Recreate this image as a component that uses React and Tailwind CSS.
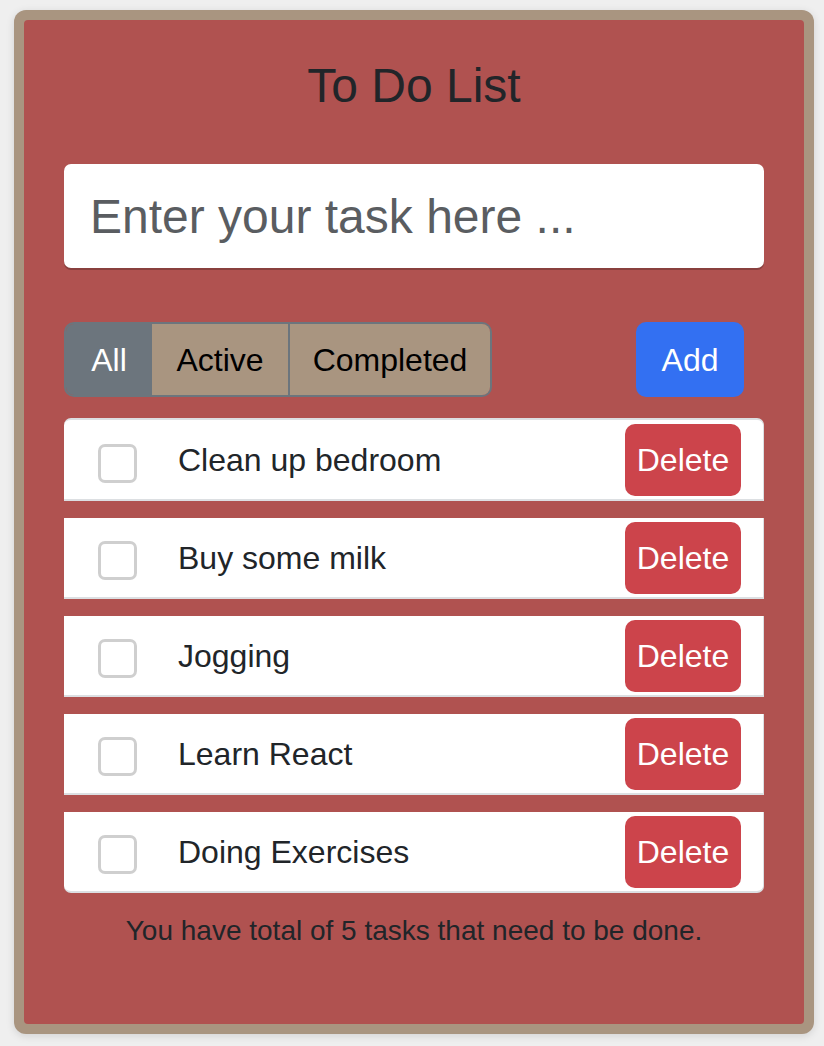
import { useState } from 'react'

const initialTasks = [
  { id: 1, title: 'Clean up bedroom', done: false },
  { id: 2, title: 'Buy some milk', done: false },
  { id: 3, title: 'Jogging', done: false },
  { id: 4, title: 'Learn React', done: false },
  { id: 5, title: 'Doing Exercises', done: false },
]

function FilterGroup({ filter, onChange }) {
  const base = 'flex h-full items-center justify-center text-[32px] leading-none'
  return (
    <div className="flex h-[75px] w-[428px] overflow-hidden rounded-[10px] border-2 border-[#6c757d]">
      <button
        className={`${base} w-[86px] ${filter === 'all' ? 'bg-[#6c757d] text-white' : 'bg-[#a99580] text-black'}`}
        onClick={() => onChange('all')}
      >
        All
      </button>
      <button
        className={`${base} w-[136px] ${filter === 'active' ? 'bg-[#6c757d] text-white' : 'bg-[#a99580] text-black'}`}
        onClick={() => onChange('active')}
      >
        Active
      </button>
      <button
        className={`${base} flex-1 border-l-2 border-[#6c757d] ${filter === 'completed' ? 'bg-[#6c757d] text-white' : 'bg-[#a99580] text-black'}`}
        onClick={() => onChange('completed')}
      >
        Completed
      </button>
    </div>
  )
}

function TaskRow({ task, isFirst, isLast, onToggle, onDelete }) {
  return (
    <li
      className={`flex items-center border-b-2 border-r border-[#dcdfe2] bg-white pl-[34px] pr-[22px] ${
        isFirst ? 'h-[83px] rounded-t-[7px] border-t-2 pt-[1px]' : 'mt-[17px] h-[81px]'
      } ${isLast ? 'rounded-b-[7px]' : ''}`}
    >
      <button
        className={`mt-[6px] h-[39px] w-[39px] shrink-0 rounded-[7px] border-[3px] border-[#cfcfcf] ${task.done ? 'bg-[#cfcfcf]' : 'bg-white'}`}
        onClick={() => onToggle(task.id)}
      />
      <span className={`ml-[41px] flex-1 text-[32px] text-[#212529] ${task.done ? 'line-through' : ''}`}>
        {task.title}
      </span>
      <button
        className="h-[72px] w-[116px] rounded-[10px] bg-[#cc444b] text-[32px] leading-none text-white"
        onClick={() => onDelete(task.id)}
      >
        Delete
      </button>
    </li>
  )
}

export default function App() {
  const [tasks, setTasks] = useState(initialTasks)
  const [text, setText] = useState('')
  const [filter, setFilter] = useState('all')

  const visible = tasks.filter((t) =>
    filter === 'all' ? true : filter === 'active' ? !t.done : t.done
  )
  const remaining = tasks.filter((t) => !t.done).length

  const addTask = () => {
    if (!text.trim()) return
    setTasks([...tasks, { id: Date.now(), title: text.trim(), done: false }])
    setText('')
  }

  return (
    <div className="min-h-[1046px] bg-[#efefef] pl-[14px] pt-[10px] font-['Liberation_Sans',Arial,sans-serif]">
      <div className="w-[800px] rounded-[12px] bg-[#a99580] p-[10px] shadow-[0_2px_8px_rgba(0,0,0,0.12)]">
        <div className="rounded-[4px] bg-[#b05250] px-[40px] pb-[72px] pt-[38px]">
          <h1 className="text-center text-[48px] leading-[56px] text-[#212529]">To Do List</h1>

          <input
            className="mt-[50px] block h-[104px] w-full rounded-[7px] bg-white px-[26px] text-[48px] text-[#212529] shadow-[0_2px_0_rgba(0,0,0,0.22)] outline-none placeholder:text-[#5a5d61]"
            placeholder="Enter your task here ..."
            value={text}
            onChange={(e) => setText(e.target.value)}
            onKeyDown={(e) => e.key === 'Enter' && addTask()}
          />

          <div className="mt-[54px] flex items-center justify-between">
            <FilterGroup filter={filter} onChange={setFilter} />
            <button
              className="mr-[20px] h-[75px] w-[108px] rounded-[10px] bg-[#3370f2] text-[32px] leading-none text-white"
              onClick={addTask}
            >
              Add
            </button>
          </div>

          <ul className="mt-[21px]">
            {visible.map((task, i) => (
              <TaskRow
                key={task.id}
                task={task}
                isFirst={i === 0}
                isLast={i === visible.length - 1}
                onToggle={(id) => setTasks(tasks.map((t) => (t.id === id ? { ...t, done: !t.done } : t)))}
                onDelete={(id) => setTasks(tasks.filter((t) => t.id !== id))}
              />
            ))}
          </ul>

          <p className="mt-[17px] text-center text-[28px] leading-[42px] text-[#212529]">
            You have total of {remaining} tasks that need to be done.
          </p>
        </div>
      </div>
    </div>
  )
}
